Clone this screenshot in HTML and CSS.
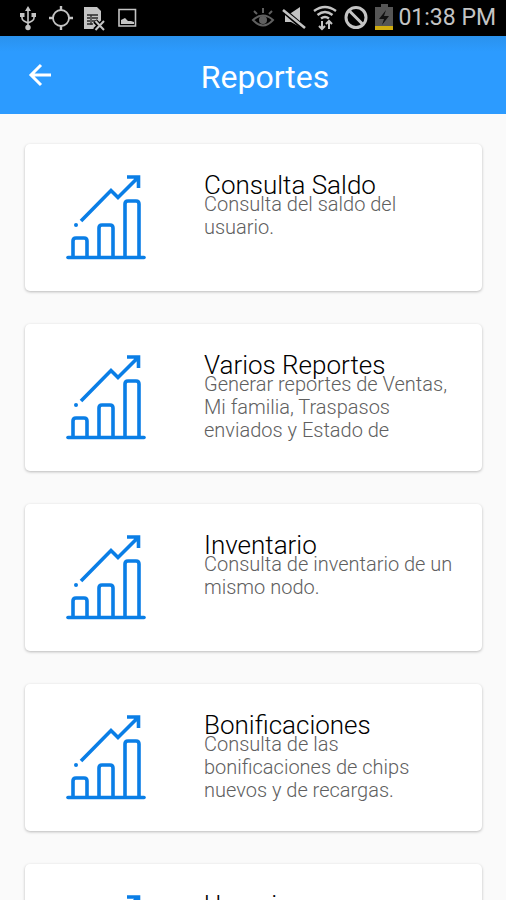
FILE: index.html
```html
<!DOCTYPE html>
<html lang="es">
<head>
<meta charset="utf-8">
<meta name="viewport" content="width=device-width, initial-scale=1">
<title>Reportes</title>
<link rel="stylesheet" href="styles.css">
</head>
<body>
<svg class="defs" aria-hidden="true">
  <symbol id="chart" viewBox="0 0 92 92">
    <g fill="none" stroke="#0a7ee6" stroke-width="3.600" stroke-linecap="round" stroke-linejoin="round">
      <path d="M8 87.500H84"/>
      <path d="M13 87V71q0-3 3-3h8q3 0 3 3v16M39 87V58q0-3 3-3h8q3 0 3 3v29M65 87V34q0-3 3-3h8q3 0 3 3v53"/>
      <path stroke-linecap="butt" stroke-linejoin="miter" d="M21 51 51 20.500l7 7L78 7.500M67 7H78.500v11"/>
      <path stroke-width="4" d="M16 55v.01"/>
    </g>
  </symbol>
</svg>
<div class="screen">
  <div class="status">
    <div class="status-icons">
      <svg class="s-icon" viewBox="0 0 24 28" fill="none" stroke="#c4c4c4" stroke-width="1.600"><path d="M12 6v17M6 11v3q0 2 2 3l4 2 4-2q2-1 2-3v-3"/><path fill="#c4c4c4" stroke="none" d="m12 2 3 5H9zM4 9h4.500v4H4zM15.500 9H20v4h-4.500z"/><circle cx="12" cy="23.500" r="2.700" fill="#c4c4c4" stroke="none"/></svg>
      <svg class="s-icon" viewBox="0 0 24 28" fill="none" stroke="#c4c4c4" stroke-width="1.800"><circle cx="12" cy="14" r="8"/><path stroke-width="2.400" d="M12 2v5M12 21v5M0 14h5M19 14h5"/></svg>
      <svg class="s-icon" viewBox="0 0 24 28"><path fill="#c4c4c4" d="M2 3h13l4 4v18H2z"/><path fill="none" stroke="#292929" stroke-width="1.300" d="M5 11h11M5 14h3m2 0h6M5 17h3m2 0h4M5 20h6M9 11v10"/><path stroke="#000" stroke-width="5" d="m13 17 9 9m0-9-9 9"/><path stroke="#c4c4c4" stroke-width="2" d="m13.500 17 8.500 9m0-9-8.500 9"/></svg>
      <svg class="s-icon" viewBox="0 0 24 28"><path fill="none" stroke="#c4c4c4" stroke-width="1.600" d="M4 5.500h16.500v16.500H4z"/><path fill="#c4c4c4" d="M6 20v-4l4-2 3 3h3l3 1v2z"/></svg>
    </div>
    <div class="status-icons status-right">
      <svg class="s-icon" viewBox="0 0 24 28" fill="none" stroke="#606060" stroke-width="2"><path d="M2 16q10-9 20 0-10 11-20 0zM12 9V4M6 10 3 7M18 10l3-3"/><circle cx="12" cy="16" r="3" fill="#606060"/></svg>
      <svg class="s-icon" viewBox="0 0 24 28"><path fill="#c4c4c4" d="M3 9h6l9-6v20l-9-5H3z"/><path stroke="#000" stroke-width="5" d="m1 6 21 18"/><path stroke="#c4c4c4" stroke-width="2.600" d="m1 6 22 18"/></svg>
      <svg class="s-icon" viewBox="0 0 24 28" fill="none" stroke="#c4c4c4" stroke-width="2.400"><path d="M1 7q11-8 22 0M4.500 11q7.500-6 15 0M8 14.500q4-3 8 0"/><path stroke-width="2" d="M9 17v8m-3-3 3 3 3-3M16 25v-8m-3 3 3-3 3 3"/></svg>
      <svg class="s-icon" viewBox="0 0 24 28" fill="none" stroke="#c4c4c4" stroke-width="3"><circle cx="12" cy="13.500" r="10"/><path d="m5 6.500 14 14"/></svg>
      <svg class="s-icon s-battery" viewBox="3 0 18 28"><path fill="#555" d="M9 0h7v3h5v20H3V3h6z"/><path fill="#d0ac10" d="M3 22h18v4H3z"/><path fill="#111" d="m14 6-7 9h5l-2 6 7-9h-5z"/></svg>
    </div>
    <time class="clock">01:38 PM</time>
  </div>
  <header class="bar">
    <button class="back" type="button" aria-label="Atrás">
      <svg class="arrow" viewBox="0 0 24 24" fill="none" stroke="#fff" stroke-width="3"><path d="M23 12H3M13 2 3 12l10 10"/></svg>
    </button>
    <h1 class="title">Reportes</h1>
  </header>
  <main class="list">
    <a class="card" href="#saldo"><svg class="chart"><use href="#chart"/></svg><div class="text"><h2 class="name">Consulta Saldo</h2><p class="desc">Consulta del saldo del usuario.</p></div></a>
    <a class="card" href="#varios"><svg class="chart"><use href="#chart"/></svg><div class="text"><h2 class="name">Varios Reportes</h2><p class="desc">Generar reportes de Ventas, Mi familia, Traspasos enviados y Estado de</p></div></a>
    <a class="card" href="#inventario"><svg class="chart"><use href="#chart"/></svg><div class="text"><h2 class="name">Inventario</h2><p class="desc">Consulta de inventario de un mismo nodo.</p></div></a>
    <a class="card" href="#bonificaciones"><svg class="chart"><use href="#chart"/></svg><div class="text"><h2 class="name">Bonificaciones</h2><p class="desc">Consulta de las bonificaciones de chips nuevos y de recargas.</p></div></a>
    <a class="card" href="#usuarios"><svg class="chart"><use href="#chart"/></svg><div class="text"><h2 class="name">Usuarios</h2></div></a>
  </main>
</div>
</body>
</html>
```
FILE: styles.css
```css
* {
  box-sizing: border-box;
}

body {
  margin: 0;
  font-family: Roboto, "Liberation Sans", sans-serif;
  background: #fafafa;
}

.defs {
  display: none;
}

.screen {
  display: flex;
  flex-direction: column;
  height: 100vh;
  overflow: hidden;
}

.status {
  display: flex;
  flex: none;
  align-items: center;
  height: 36px;
  padding: 0 10px 0 16px;
  background: #000;
  color: #c4c4c4;
}

.status-icons {
  display: flex;
  gap: 9px;
}

.status-right {
  gap: 7px;
  margin-left: auto;
}

.s-icon {
  width: 24px;
  height: 28px;
}

.s-battery {
  width: 18px;
}

.clock {
  margin-left: 5px;
  font-size: 23px;
  line-height: 36px;
}

.bar {
  display: grid;
  flex: none;
  grid-template-columns: 80px 1fr 56px;
  align-items: center;
  height: 78px;
  background: linear-gradient(#2a92ed, #2c9bff 16px);
  color: #fff;
}

.back {
  display: flex;
  align-items: center;
  justify-content: center;
  height: 78px;
  padding: 0;
  border: 0;
  background: none;
}

.arrow {
  width: 24px;
  height: 24px;
}

.title {
  margin: 0;
  padding-top: 4px;
  font-size: 32px;
  font-weight: 400;
  line-height: 40px;
  text-align: center;
}

.list {
  display: flex;
  flex: 1;
  flex-direction: column;
  gap: 33px;
  min-height: 0;
  padding: 30px 24px 0 25px;
  overflow: hidden;
}

.card {
  display: grid;
  flex: none;
  grid-template-columns: 144px 1fr;
  min-height: 147px;
  padding: 26px 24px 20px 35px;
  border-radius: 5px;
  background: #fff;
  box-shadow: 0 1px 3px rgba(0, 0, 0, 0.26);
  color: #000;
  text-decoration: none;
}

.chart {
  width: 92px;
  height: 92px;
}

.name {
  margin: 0;
  font-size: 26px;
  font-weight: 300;
  line-height: 30px;
}

.desc {
  margin: -7px 0 0;
  color: #606060;
  font-size: 20px;
  font-weight: 300;
  line-height: 23px;
}
```
